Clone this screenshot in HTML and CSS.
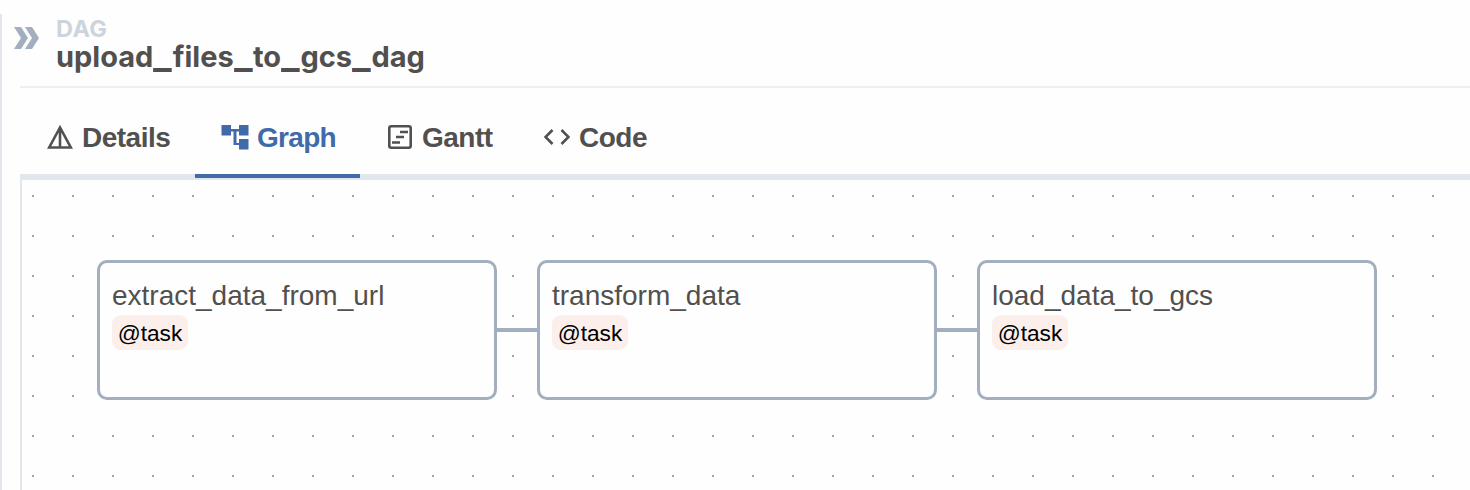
FILE: index.html
```html
<!DOCTYPE html>
<html lang="en">
<head>
<meta charset="utf-8">
<title>upload_files_to_gcs_dag</title>
<link rel="stylesheet" href="styles.css">
</head>
<body>
<main class="panel">
  <header class="header">
    <svg class="chevrons" viewBox="0 0 26 22" width="26" height="22"><path d="M0 0H7L14 11L7 22H0L7 11ZM11 0H18L25 11L18 22H11L18 11Z"/></svg>
    <div class="heading">
      <div class="kind">DAG</div>
      <h1 class="title">upload<span class="underscore">_</span>files<span class="underscore">_</span>to<span class="underscore">_</span>gcs<span class="underscore">_</span>dag</h1>
    </div>
  </header>
  <nav class="tabs">
    <a class="tab details"><svg width="26" height="24" viewBox="0 0 26 24"><path class="line" d="M13 2.500L2.200 22.500H23.800ZM13 2V23"/></svg><span>Details</span></a>
    <a class="tab graph active"><svg width="28" height="25" viewBox="0 0 28 25"><path d="M.5 0H10V4H18V0H27.500V10.500H18V6.500H15.500V18H18V14H27.500V24.500H18V20H12.500V6.500H10V10.500H.5Z"/></svg><span>Graph</span></a>
    <a class="tab gantt"><svg width="24" height="24" viewBox="0 0 24 24"><rect class="line" x="1.300" y="1.300" width="21.400" height="21.400" rx="2"/><path class="line" d="M12 7H20M8 12H16M4 17.500H12"/></svg><span>Gantt</span></a>
    <a class="tab code"><svg width="26" height="16" viewBox="0 0 26 16"><path class="line" d="M8.500 1L1.500 8L8.500 15M17.500 1L24.500 8L17.500 15"/></svg><span>Code</span></a>
  </nav>
  <section class="canvas">
    <div class="node"><div class="name">extract_data_from_url</div><span class="badge">@task</span></div>
    <div class="edge"></div>
    <div class="node"><div class="name">transform_data</div><span class="badge">@task</span></div>
    <div class="edge"></div>
    <div class="node"><div class="name">load_data_to_gcs</div><span class="badge">@task</span></div>
  </section>
</main>
</body>
</html>
```
FILE: styles.css
```css
* { box-sizing: border-box; }
body { margin: 0; background: #fefefe; color: #51504f; font-family: "Liberation Sans", Arial, sans-serif; overflow: hidden; }
.panel { height: 476px; margin-top: 14px; border-left: 2px solid #e2e7ed; padding-left: 18px; display: flex; flex-direction: column; }
.header { height: 74px; flex: none; border-bottom: 2px solid #edf0f2; display: flex; }
.chevrons { margin: 13px 0 0 -6px; fill: #a3aebe; flex: none; }
.heading { margin-left: 16px; font-family: Inter, sans-serif; font-weight: 700; }
.kind { font-size: 23.5px; line-height: 29px; height: 28px; color: #cdd4de; letter-spacing: .4px; }
.title { margin: 0; font-size: 29px; line-height: 30px; font-weight: 700; white-space: nowrap; }
.underscore { display: inline-block; width: 19.3px; transform: scale(1.35, 1.2); transform-origin: left 75%; }
.tabs { height: 92px; flex: none; border-bottom: 6px solid #e2e7ed; display: flex; padding-top: 12px; }
.tab { height: 78px; display: flex; align-items: center; font-size: 28px; font-weight: 700; flex: none; gap: 8px; padding-bottom: 4px; }
.tab svg { fill: currentColor; flex: none; }
.tab span { padding-top: 2px; letter-spacing: -.5px; }
.tab .line { fill: none; stroke: currentColor; stroke-width: 2.6; }
.details { width: 175px; padding-left: 27px; }
.details span { margin-left: 1px; }
.graph { width: 165px; padding-left: 26px; }
.graph span { letter-spacing: -.7px; }
.gantt { width: 157px; padding-left: 28px; }
.gantt span { margin-left: 2px; }
.code { padding-left: 27px; }
.code span { margin-left: 1px; }
.active { color: #416aaa; border-bottom: 4px solid #416aaa; padding-bottom: 0; }
.canvas { flex: 1; border-left: 2px solid #e2e7ed; padding: 80px 0 0 75px; display: flex; align-items: flex-start; background: conic-gradient(from 90deg at 38px 38px, #a5a5a5 25%, transparent 0) -28px -23px / 40px 40px; }
.node { width: 400px; height: 140px; flex: none; border: 3px solid #a3aebe; border-radius: 10px; background: #fefefe; padding: 17px 12px; }
.name { font-size: 28px; line-height: 32px; white-space: nowrap; }
.badge { display: block; width: 76px; height: 35px; margin-top: 3px; padding-top: 1px; border-radius: 9px; background: #fceeeb; color: #000; font-size: 22.7px; line-height: 34px; text-align: center; }
.edge { width: 40px; height: 4px; flex: none; margin-top: 68px; background: #a3aebe; }
```
